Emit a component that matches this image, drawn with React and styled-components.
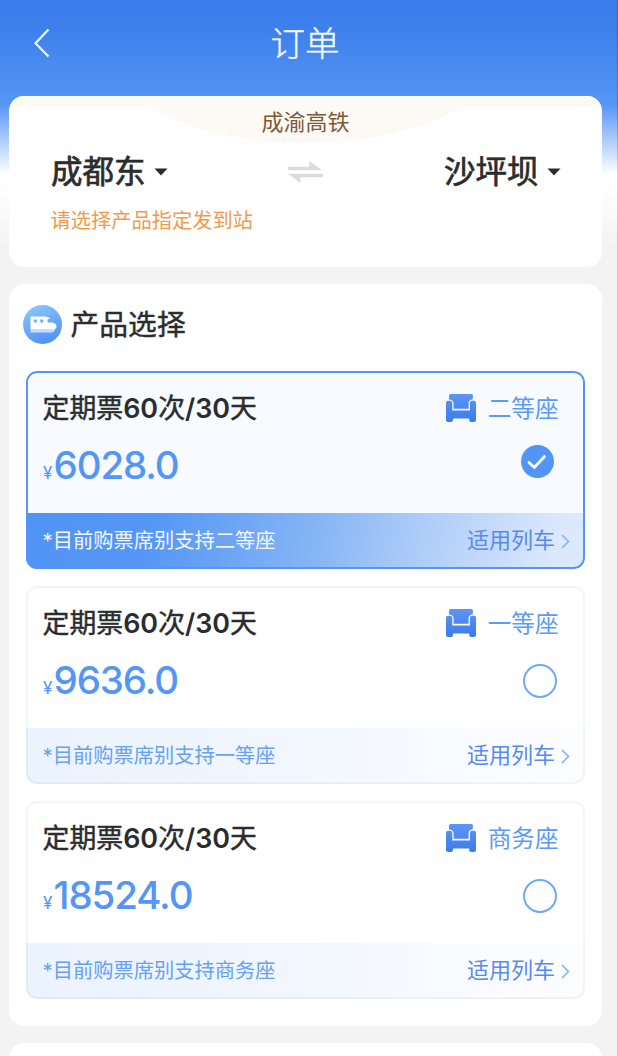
import React from 'react';
import styled, { createGlobalStyle } from 'styled-components';

const GlobalStyle = createGlobalStyle`
  * { box-sizing: border-box; }
  body {
    margin: 0;
    overflow: hidden;
    background: #f3f3f3;
    font-family: Inter, "Noto Sans CJK SC", sans-serif;
    color: #2b2c2e;
  }
`;

const Page = styled.div`
  height: 1056px;
  overflow: hidden;
  display: flex;
  flex-direction: column;
  border-right: 1px solid rgba(0, 0, 0, 0.17);
  background: linear-gradient(
    180deg,
    #3c7eeb 0,
    #3d80ec 28px,
    #5294f4 96px,
    #5596f5 104px,
    #ffffff 174px,
    #fdfdfd 195px,
    #f3f3f3 245px
  );
`;

const Header = styled.header`
  flex: none;
  height: 96px;
  padding: 0 40px 9px 33px;
  display: grid;
  grid-template-columns: 40px 1fr 40px;
  align-items: center;
`;

const Title = styled.h1`
  margin: 0;
  padding-top: 1px;
  font-size: 34.5px;
  font-weight: 300;
  line-height: 48px;
  text-align: center;
  color: #f6faff;
  -webkit-text-stroke: 0.4px currentColor;
`;

const Main = styled.main`
  display: flex;
  flex-direction: column;
  gap: 17px;
  padding: 0 15.5px 0 9px;
`;

const Card = styled.section`
  flex: none;
  height: ${(p) => p.$height}px;
  border-radius: 15px;
  background: #fff;
  overflow: hidden;
`;

const LineBanner = styled.div`
  display: grid;
  height: 48px;
  > * { grid-area: 1 / 1; }
`;

const LineName = styled.span`
  padding-top: 10px;
  font-size: 22px;
  line-height: 32px;
  text-align: center;
  color: #7d5a36;
`;

const Stations = styled.div`
  display: flex;
  justify-content: space-between;
  align-items: center;
  height: 56px;
  padding: 0 41px 0 42px;
`;

const Station = styled.div`
  display: flex;
  align-items: center;
  gap: 8px;
  font-size: 31.5px;
  line-height: 46px;
  -webkit-text-stroke: 0.7px currentColor;
`;

const Hint = styled.p`
  margin: 6px 0 0 41.5px;
  font-size: 20.25px;
  line-height: 30px;
  color: #f19a4a;
`;

const SectionHead = styled.div`
  display: flex;
  align-items: center;
  gap: 9px;
  height: 87px;
  padding: 0 13.5px 6px;
`;

const SectionTitle = styled.h2`
  margin: 0;
  font-size: 28.8px;
  font-weight: 400;
  line-height: 42px;
  -webkit-text-stroke: 0.4px currentColor;
`;

const Options = styled.div`
  display: flex;
  flex-direction: column;
  gap: 17px;
  padding: 0 17px;
`;

const Option = styled.article`
  display: flex;
  flex-direction: column;
  height: 198px;
  border-radius: 11px;
  overflow: hidden;
  position: relative;
  background: ${(p) => (p.$on ? '#f7faff' : '#fff')};
  &::after {
    content: '';
    position: absolute;
    inset: 0;
    border-radius: inherit;
    border: ${(p) => (p.$on ? '2.5px solid #5495f5' : '2px solid rgba(0, 20, 60, 0.045)')};
  }
`;

const Row = styled.div`
  display: flex;
  justify-content: space-between;
  align-items: ${(p) => (p.$top ? 'flex-start' : 'center')};
  height: ${(p) => p.$height}px;
  padding: ${(p) => p.$pad};
`;

const Name = styled.h3`
  margin: 0;
  font-size: 26.9px;
  font-weight: 400;
  line-height: 40px;
  white-space: nowrap;
  -webkit-text-stroke: 0.45px currentColor;
  b {
    font-weight: 600;
    -webkit-text-stroke: 0;
  }
`;

const Seat = styled.div`
  display: flex;
  align-items: center;
  gap: 12px;
  font-size: 23.6px;
  line-height: 34px;
  color: #5b9bf5;
  span { padding-top: 3px; }
`;

const Price = styled.div`
  display: flex;
  align-items: baseline;
  font-size: 38.5px;
  font-weight: 500;
  line-height: 48px;
  letter-spacing: -1.1px;
  color: #5396f6;
  small {
    width: 10.5px;
    font-size: 17px;
    font-weight: 400;
    letter-spacing: 0;
  }
`;

const Radio = styled.span`
  display: grid;
  place-items: center;
  width: ${(p) => (p.$on ? 33 : 34)}px;
  height: ${(p) => (p.$on ? 33 : 34)}px;
  margin: ${(p) => (p.$on ? '4px 3px 0 0' : '8px 0 0 0')};
  border-radius: 50%;
  border: ${(p) => (p.$on ? 'none' : '2px solid #70a8f7')};
  background: ${(p) => (p.$on ? '#5295f6' : 'transparent')};
`;

const Footer = styled.footer`
  flex: 1;
  display: flex;
  justify-content: space-between;
  align-items: center;
  padding: 0 15px 4px 16.5px;
  font-size: 20.25px;
  color: ${(p) => (p.$on ? '#f2f7ff' : '#66a1f5')};
  background: ${(p) =>
    p.$on
      ? 'linear-gradient(100deg, #5294f5 0%, #5596f5 22%, #86b5f5 52%, #a9caf8 68%, #dce9fd 95%)'
      : 'linear-gradient(90deg, #ebf3fe 0%, #f2f7fe 50%, #f8fbff 75%, #fcfdff 100%)'};
`;

const TrainLink = styled.a`
  display: flex;
  align-items: center;
  gap: 5.5px;
  padding-top: 1px;
  font-size: 22px;
  line-height: 32px;
  color: #5889f0;
  svg { margin-top: 3px; }
`;

const BackIcon = () => (
  <svg width="18" height="30" viewBox="0 0 18 30" fill="none">
    <path d="M15.500 0.500 2.500 14.200l13 13.200" stroke="#f2f7ff" strokeWidth="2.2" />
  </svg>
);

const BannerShape = () => (
  <svg width="593" height="48" viewBox="0 0 592 48">
    <path
      d="M0 0h592v12C590 10.500 586 10.500 580 10.500H465C444 11 438 20 416 28C380 41 335 47 296 47S212 41 177 28C155 20 149 11 130 10.500H12C6 10.500 2 10.500 0 12Z"
      fill="#fdf9f4"
    />
  </svg>
);

const Caret = () => (
  <svg width="14" height="8" viewBox="0 0 14 8">
    <path d="M.5.500h13L7 7.500Z" fill="#2b2c2e" />
  </svg>
);

const SwapIcon = () => (
  <svg width="35" height="22" viewBox="0 0 35 22" fill="#dcdcdc">
    <path d="M0 5.800h21.300V0L34 9.300H0Z" />
    <path d="M35 12.800H0L12.300 22v-5.700H35Z" />
  </svg>
);

const TrainIcon = () => (
  <svg width="39" height="39" viewBox="0 0 39 39">
    <defs>
      <linearGradient id="train" x1="0.3" y1="0" x2="0.7" y2="1">
        <stop offset="0" stopColor="#8cc5fb" />
        <stop offset="1" stopColor="#4a90f6" />
      </linearGradient>
    </defs>
    <circle cx="19.500" cy="19.500" r="19.500" fill="url(#train)" />
    <path d="M7.500 11.500H22C24 11.500 26.500 12.500 27 14H24.500V17.500H29C32 18 33.500 19.500 33.500 21.500Q33.500 24 31 24H7.500Z" fill="#fff" />
    <path d="M10.800 14.500h3v3h-3zM17.300 14.500h3v3h-3z" fill="#70adf8" />
    <path d="M7.500 24h24.500Q31.500 27.500 28.500 27.500h-21Z" fill="#c4dffd" />
  </svg>
);

const SeatIcon = () => (
  <svg width="30" height="28" viewBox="0 0 30 28">
    <defs>
      <linearGradient id="seat" x1="0" y1="0" x2="0" y2="28" gradientUnits="userSpaceOnUse">
        <stop offset="0" stopColor="#5f95f5" />
        <stop offset="1" stopColor="#3b7bea" />
      </linearGradient>
    </defs>
    <g fill="url(#seat)">
      <path d="M4.500 0h21Q27 0 27 2L26.600 5.600Q23 6 22.600 9V14.800H7.600V9Q7 6 3 5.600V2Q3 0 4.500 0Z" />
      <path d="M2 6.800H4Q6.300 6.800 6.300 9V16.500H23.900V9Q23.900 6.800 26 6.800H28Q30 6.800 30 9V26Q30 28 28 28H25.200Q23.200 28 23.200 26V24.500H7V26Q7 28 5 28H2Q0 28 0 26V9Q0 6.800 2 6.800Z" />
    </g>
  </svg>
);

const CheckIcon = () => (
  <svg width="20" height="16" viewBox="0 0 20 16" fill="none">
    <path d="m2 8.500 5.300 5L17.500 2.500" stroke="#fff" strokeWidth="2.8" strokeLinecap="round" strokeLinejoin="round" />
  </svg>
);

const ChevronIcon = () => (
  <svg width="9" height="15" viewBox="0 0 9 15" fill="none">
    <path d="m1 1 6.500 6.500L1 14" stroke="#86b4f7" strokeWidth="1.7" />
  </svg>
);

const tickets = [
  { seat: '二等座', price: '6028.0', on: true },
  { seat: '一等座', price: '9636.0', on: false },
  { seat: '商务座', price: '18524.0', on: false },
];

function Ticket({ seat, price, on }) {
  return (
    <Option $on={on}>
      <Row $height={70} $pad="3px 26px 0 16.500px">
        <Name>定期票<b>60</b>次<b>/30</b>天</Name>
        <Seat><SeatIcon /><span>{seat}</span></Seat>
      </Row>
      <Row $height={72} $pad="0 28px 0 17px" $top>
        <Price><small>¥</small>{price}</Price>
        <Radio $on={on}>{on && <CheckIcon />}</Radio>
      </Row>
      <Footer $on={on}>
        <span>*目前购票席别支持{seat}</span>
        <TrainLink>适用列车<ChevronIcon /></TrainLink>
      </Footer>
    </Option>
  );
}

export default function App() {
  return (
    <Page>
      <GlobalStyle />
      <Header>
        <BackIcon />
        <Title>订单</Title>
      </Header>
      <Main>
        <Card $height={171}>
          <LineBanner>
            <BannerShape />
            <LineName>成渝高铁</LineName>
          </LineBanner>
          <Stations>
            <Station>成都东<Caret /></Station>
            <SwapIcon />
            <Station>沙坪坝<Caret /></Station>
          </Stations>
          <Hint>请选择产品指定发到站</Hint>
        </Card>
        <Card $height={742}>
          <SectionHead>
            <TrainIcon />
            <SectionTitle>产品选择</SectionTitle>
          </SectionHead>
          <Options>
            {tickets.map((t) => <Ticket key={t.seat} {...t} />)}
          </Options>
        </Card>
        <Card $height={120} />
      </Main>
    </Page>
  );
}
